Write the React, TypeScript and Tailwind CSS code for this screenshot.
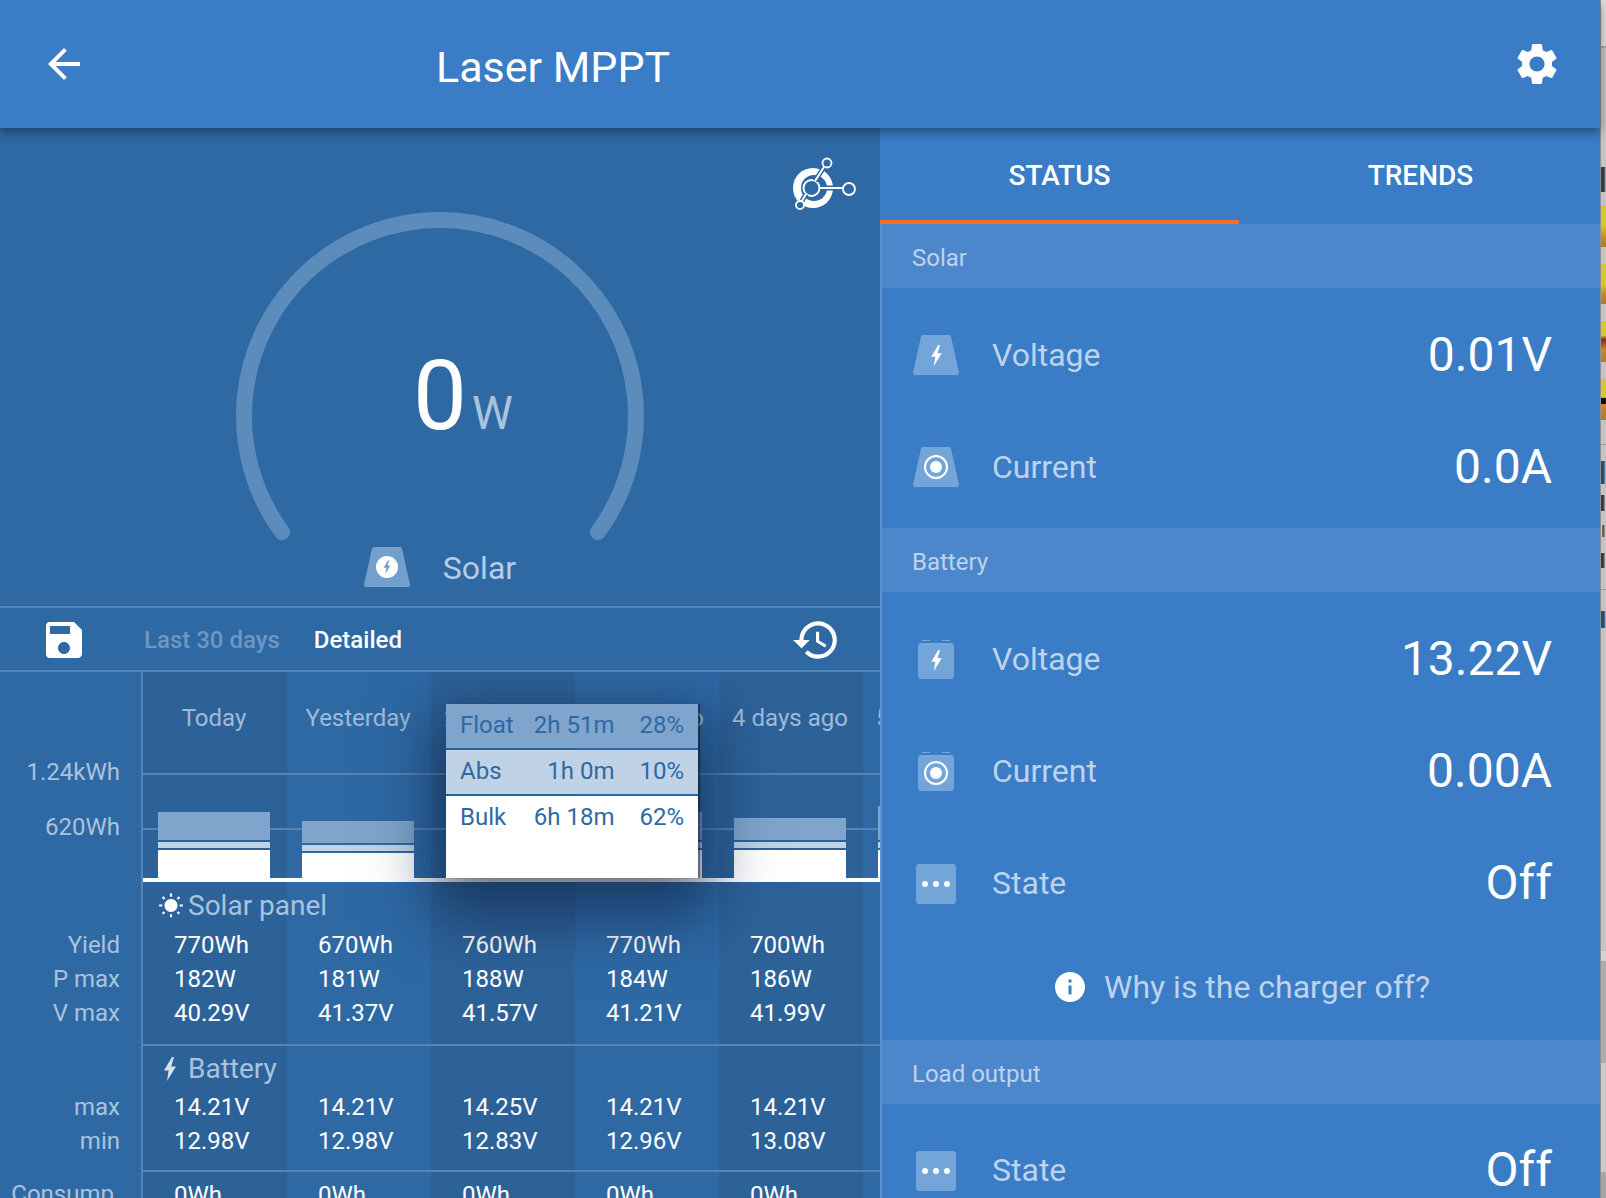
import { MdArrowBack, MdSave, MdSettings, MdHistory, MdInfo, MdWbSunny } from "react-icons/md";

const days = [
  { name: "Today", bar: [28, 28], yieldV: "770Wh", pmax: "182W", vmax: "40.29V", bmax: "14.21V", bmin: "12.98V", shade: true },
  { name: "Yesterday", bar: [22, 25], yieldV: "670Wh", pmax: "181W", vmax: "41.37V", bmax: "14.21V", bmin: "12.98V", shade: false },
  { name: "2 days ago", bar: [28, 28], yieldV: "760Wh", pmax: "188W", vmax: "41.57V", bmax: "14.25V", bmin: "12.83V", shade: true },
  { name: "3 days ago", bar: [28, 28], yieldV: "770Wh", pmax: "184W", vmax: "41.21V", bmax: "14.21V", bmin: "12.96V", shade: false },
  { name: "4 days ago", bar: [22, 28], yieldV: "700Wh", pmax: "186W", vmax: "41.99V", bmax: "14.21V", bmin: "13.08V", shade: true },
  { name: "5 days ago", bar: [34, 28], yieldV: "", pmax: "", vmax: "", bmax: "", bmin: "", shade: false },
];

// slice of the window behind the app, visible at the right edge
const strip = [
  "h-[46px] bg-[#dedede]",
  "h-[2px] bg-[#a8a8a8]",
  "h-[119px] bg-[#c4c4c4]",
  "h-[25px] bg-[linear-gradient(90deg,#2c3a4c_60%,#c4c4c4_100%)]",
  "h-[13px] bg-[#c4c4c4]",
  "h-[42px] bg-[linear-gradient(#d3c832_0%,#d3c832_50%,#c98a22_75%,#b07a28_100%)]",
  "h-[17px] bg-[#c4c4c4]",
  "h-[40px] bg-[linear-gradient(#d3c832_0%,#d3c832_50%,#c98a22_75%,#b07a28_100%)]",
  "h-[17px] bg-[#c4c4c4]",
  "h-[41px] bg-[linear-gradient(#d3c832_0%,#d3c832_35%,#8a2a20_45%,#c98a22_70%,#b07a28_100%)]",
  "h-[17px] bg-[#c4c4c4]",
  "h-[41px] bg-[linear-gradient(#d3c832_0%,#d3c832_45%,#111_46%,#111_60%,#c98a22_61%,#b07a28_100%)]",
  "h-[24px] bg-[#c4c4c4]",
  "h-[1px] bg-[#999999]",
  "h-[16px] bg-[#c4c4c4]",
  "h-[23px] bg-[linear-gradient(90deg,#1d4f7d_50%,#c4c4c4_100%)]",
  "h-[11px] bg-[#c4c4c4]",
  "h-[16px] bg-[linear-gradient(90deg,#333a44_45%,#c4c4c4_90%)]",
  "h-[14px] bg-[#c4c4c4]",
  "h-[12px] bg-[linear-gradient(90deg,#c4c4c4_10%,#5b3a1a_40%,#c4c4c4_90%)]",
  "h-[16px] bg-[#c4c4c4]",
  "h-[15px] bg-[linear-gradient(90deg,#333a44_45%,#c4c4c4_90%)]",
  "h-[21px] bg-[#c4c4c4]",
  "h-[1px] bg-[#999999]",
  "h-[21px] bg-[#c4c4c4]",
  "h-[17px] bg-[linear-gradient(90deg,#1d4f7d_60%,#c4c4c4_100%)]",
  "h-[323px] bg-[#c4c4c4]",
  "h-[10px] bg-[#d4d4d4]",
  "h-[102px] bg-[#adadad]",
  "h-[109px] bg-[#cacaca]",
  "h-[26px] bg-[#a5a5a5]",
];

function Bolt({ className }: { className?: string }) {
  return (
    <svg viewBox="0 0 14 24" className={className} fill="currentColor">
      <path d="M9 0 1 13.5h4.6L4 24l9-14.5H8.2L11 0z" />
    </svg>
  );
}

function Trapezoid({ children, fill = "#74a5d8" }: { children: React.ReactNode; fill?: string }) {
  return (
    <div className="relative flex h-[40px] w-[46px] items-center justify-center">
      <svg viewBox="0 0 46 40" className="absolute inset-0 h-full w-full" fill={fill}>
        <path d="M8 1.5Q8.200 0 10 0h26q1.800 0 2 1.500l8 36q.3 2.500-2 2.500H2q-2.300 0-2-2.500z" />
      </svg>
      <div className="relative">{children}</div>
    </div>
  );
}

function Battery({ children }: { children: React.ReactNode }) {
  return (
    <div className="flex flex-col items-center">
      <div className="flex w-[36px] justify-between px-[4px]">
        <div className="h-[1px] w-[8px] bg-[#74a5d8]" />
        <div className="h-[1px] w-[8px] bg-[#74a5d8]" />
      </div>
      <div className="mt-[2px] flex h-[36px] w-[36px] items-center justify-center rounded-[3px] bg-[#74a5d8]">{children}</div>
    </div>
  );
}

function Dots() {
  return (
    <div className="mt-[2px] flex h-[40px] w-[40px] items-center justify-center gap-[5px] rounded-[3px] bg-[#74a5d8]">
      <div className="h-[6px] w-[6px] rounded-full bg-white" />
      <div className="h-[6px] w-[6px] rounded-full bg-white" />
      <div className="h-[6px] w-[6px] rounded-full bg-white" />
    </div>
  );
}

function Target() {
  return (
    <div className="flex h-[24px] w-[24px] items-center justify-center rounded-full border-2 border-white">
      <div className="h-[12px] w-[12px] rounded-full bg-white" />
    </div>
  );
}

function SectionHead({ label }: { label: string }) {
  return <div className="flex h-[64px] shrink-0 items-center bg-[#4c87cb] pl-[30px] pt-[3px] text-[24px] text-[#bdd3ec]">{label}</div>;
}

function Row({ icon, label, value }: { icon: React.ReactNode; label: string; value: string }) {
  return (
    <div className="flex h-[112px] shrink-0 items-center pr-[48px]">
      <div className="flex w-[110px] justify-center pr-[2px]">{icon}</div>
      <span className="text-[32px] text-[#bdd3ec]">{label}</span>
      <span className="ml-auto text-[48px] text-white">{value}</span>
    </div>
  );
}

function DayColumn({ day }: { day: (typeof days)[number] }) {
  return (
    <div className={`relative w-[144px] shrink-0 ${day.shade ? "bg-[#2d6299]" : "bg-[#2e69a4]"}`}>
      <div className="absolute inset-x-0 top-[101px] h-[2px] bg-[#5584b6]" />
      <div className="absolute inset-x-0 top-[156px] h-[2px] bg-[#5584b6]" />
      <div className="relative flex h-[206px] flex-col">
        <div className="whitespace-nowrap pt-[30px] pr-[2px] text-center text-[24px] leading-[32px] text-[#9fbbd8]">{day.name}</div>
        <div className="mt-auto flex flex-col gap-[2px] pl-[15px] pr-[17px]">
          <div className="bg-[#7fa5cc]" style={{ height: day.bar[0] }} />
          <div className="h-[6px] bg-[#c0d2e6]" />
          <div className="bg-white" style={{ height: day.bar[1] }} />
        </div>
      </div>
      <div className="h-[4px] bg-white" />
      <div className="h-[164px] border-b-2 border-[#5584b6] pt-[46px] pl-[31px] text-[24px] leading-[34px] text-white">
        <div>{day.yieldV}</div>
        <div>{day.pmax}</div>
        <div>{day.vmax}</div>
      </div>
      <div className="h-[126px] border-b-2 border-[#5584b6] pt-[44px] pl-[31px] text-[24px] leading-[34px] text-white">
        <div>{day.bmax}</div>
        <div>{day.bmin}</div>
      </div>
      {day.yieldV && <div className="pt-[6px] pl-[31px] text-[24px] leading-[34px] text-white">0Wh</div>}
    </div>
  );
}

function Table() {
  return (
    <div className="relative flex min-h-0 flex-1 overflow-hidden">
      <div className="w-[141px] shrink-0 pr-[21px] text-right text-[24px] leading-[34px] text-[#a9c3de]">
        <div className="pt-[83px]">1.24kWh</div>
        <div className="pt-[21px]">620Wh</div>
        <div className="pt-[84px]">Yield</div>
        <div>P max</div>
        <div>V max</div>
        <div className="pt-[60px]">max</div>
        <div>min</div>
        <div className="pt-[19px] pr-[6px]">Consump</div>
      </div>
      <div className="flex border-l-2 border-[#5584b6]">
        {days.map((d) => (
          <DayColumn key={d.name} day={d} />
        ))}
      </div>
      <div className="absolute left-[158px] top-[217px] flex items-center gap-[4px] text-[28px] leading-[34px] text-[#a9c3de]">
        <MdWbSunny className="h-[26px] w-[26px] text-white" />
        <span>Solar panel</span>
      </div>
      <div className="absolute left-[163px] top-[380px] flex items-center gap-[11px] text-[28px] leading-[34px] text-[#a9c3de]">
        <Bolt className="h-[24px] w-[14px] text-[#d5e2f0]" />
        <span>Battery</span>
      </div>
      <div className="absolute left-[446px] top-[32px] flex h-[174px] w-[252px] flex-col gap-[2px] text-[24px] text-[#2e69a4] shadow-[2px_0_1px_rgba(0,0,0,0.35),0_24px_56px_14px_rgba(10,30,60,0.6)]">
        <div className="flex h-[44px] items-center bg-[#7fa5cc] px-[14px] pb-[2px]">
          <span>Float</span>
          <span className="ml-auto mr-[25px]">2h 51m</span>
          <span>28%</span>
        </div>
        <div className="flex h-[44px] items-center bg-[#c0d2e6] px-[14px] pb-[2px]">
          <span>Abs</span>
          <span className="ml-auto mr-[25px]">1h 0m</span>
          <span>10%</span>
        </div>
        <div className="flex h-[82px] items-start bg-white px-[14px] pt-[3px]">
          <span>Bulk</span>
          <span className="ml-auto mr-[25px]">6h 18m</span>
          <span>62%</span>
        </div>
      </div>
    </div>
  );
}

function Gauge() {
  return (
    <div className="relative h-[478px] shrink-0">
      <svg viewBox="0 0 880 478" className="absolute inset-0 h-full w-full" fill="none">
        <path d="M282 404A196 196 0 1 1 598 404" stroke="#5c8cbb" strokeWidth="16" strokeLinecap="round" />
      </svg>
      <svg viewBox="0 0 66 58" className="absolute left-[791px] top-[28px] h-[58px] w-[66px]" fill="none">
        <circle cx="22" cy="32" r="20" fill="#fff" />
        <circle cx="23" cy="32" r="13" fill="#2e69a4" />
        <circle cx="20.500" cy="32" r="8" stroke="#fff" strokeWidth="2" />
        <path d="M24 25 33 11M29 32h23M15 38l-4 7" stroke="#2e69a4" strokeWidth="5" />
        <path d="M24 25 33 11M29 32h23M15 38l-4 7" stroke="#fff" strokeWidth="2" />
        <circle cx="36" cy="7" r="4.500" stroke="#fff" strokeWidth="1.800" fill="#2e69a4" />
        <circle cx="58" cy="33" r="6" stroke="#fff" strokeWidth="1.800" fill="#2e69a4" />
        <circle cx="9" cy="49" r="4" stroke="#fff" strokeWidth="1.800" fill="#2e69a4" />
      </svg>
      <div className="relative flex h-full flex-col items-center">
        <div className="mt-[220px] flex items-baseline pl-[46px] leading-none">
          <span className="text-[96px] text-white">0</span>
          <span className="ml-[5px] text-[46px] text-[#a9c3de]">W</span>
        </div>
        <div className="mt-[98px] flex items-center">
          <Trapezoid fill="#739fcd">
            <div className="flex h-[22px] w-[22px] items-center justify-center rounded-full bg-white text-[#739fcd]">
              <Bolt className="h-[14px] w-[8px]" />
            </div>
          </Trapezoid>
          <span className="ml-[33px] pt-[2px] text-[32px] text-[#b4cde8]">Solar</span>
        </div>
      </div>
    </div>
  );
}

function Toolbar() {
  return (
    <div className="flex h-[66px] shrink-0 items-center border-y-2 border-[#5584b6] pl-[40px] pr-[39px]">
      <MdSave className="mt-[2px] h-[48px] w-[48px] text-white" />
      <span className="ml-[56px] mt-[2px] text-[24px] font-medium text-[#6f97c2]">Last 30 days</span>
      <span className="ml-[34px] mt-[2px] text-[24px] font-medium text-white">Detailed</span>
      <MdHistory className="ml-auto mt-[2px] h-[50px] w-[50px] text-white" />
    </div>
  );
}

function StatusPanel() {
  const bolt = <Bolt className="h-[21px] w-[13px] text-white" />;
  return (
    <div className="flex w-[720px] flex-col bg-[#3a7cc6]">
      <div className="flex h-[96px] shrink-0 text-[28px] font-medium text-white">
        <div className="flex w-[359px] items-center justify-center border-b-4 border-[#fb6d26] pt-[4px]">STATUS</div>
        <div className="flex flex-1 items-center justify-center pl-[2px]">TRENDS</div>
      </div>
      <div className="flex min-h-0 flex-1 flex-col overflow-hidden border-l-2 border-[#5c92d0]">
        <SectionHead label="Solar" />
        <div className="h-[240px] shrink-0 pt-[11px]">
          <Row icon={<Trapezoid>{bolt}</Trapezoid>} label="Voltage" value="0.01V" />
          <Row icon={<Trapezoid><Target /></Trapezoid>} label="Current" value="0.0A" />
        </div>
        <SectionHead label="Battery" />
        <div className="h-[448px] shrink-0 pt-[11px]">
          <Row icon={<Battery>{bolt}</Battery>} label="Voltage" value="13.22V" />
          <Row icon={<Battery><Target /></Battery>} label="Current" value="0.00A" />
          <Row icon={<Dots />} label="State" value="Off" />
          <div className="flex h-[96px] items-center justify-center text-[32px] text-[#bdd3ec]">
            <MdInfo className="mr-[16px] h-[36px] w-[36px] text-white" />
            <span>Why is the charger off?</span>
          </div>
        </div>
        <SectionHead label="Load output" />
        <div className="shrink-0 pt-[10px]">
          <Row icon={<Dots />} label="State" value="Off" />
        </div>
      </div>
    </div>
  );
}

export default function App() {
  return (
    <div className="flex h-[1198px] w-[1606px] overflow-hidden bg-[#c4c4c4] font-['Roboto',sans-serif]">
      <div className="flex w-[1600px] shrink-0 flex-col">
        <header className="relative z-10 flex h-[128px] shrink-0 items-center bg-[#3a7cc6] pl-[40px] pr-[38px] text-white shadow-[0_4px_10px_rgba(0,0,0,0.4)]">
          <MdArrowBack className="h-[48px] w-[48px]" />
          <h1 className="ml-[348px] pt-[6px] text-[43px] leading-none">Laser MPPT</h1>
          <MdSettings className="ml-auto h-[50px] w-[50px]" />
        </header>
        <div className="flex min-h-0 flex-1 overflow-hidden">
          <div className="flex w-[880px] shrink-0 flex-col bg-[#2e69a4]">
            <Gauge />
            <Toolbar />
            <Table />
          </div>
          <StatusPanel />
        </div>
      </div>
      <div className="flex w-[6px] shrink-0 flex-col border-l border-[#8f8f8f]">
        {strip.map((c, i) => (
          <div key={i} className={`shrink-0 ${c}`} />
        ))}
      </div>
    </div>
  );
}
